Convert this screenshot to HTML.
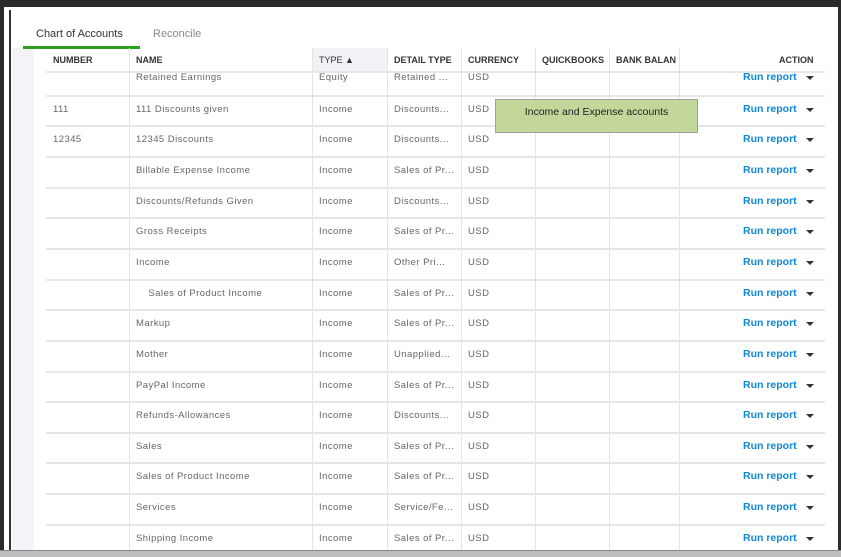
<!DOCTYPE html>
<html><head><style>
*{margin:0;padding:0;box-sizing:border-box}
body{width:841px;height:557px;background:#2b2b2b;position:relative;overflow:hidden;font-family:"Liberation Sans",sans-serif}
.page{position:absolute;left:4px;top:7px;width:834px;height:543px;background:#fff}
.vl{position:absolute;left:9px;top:10px;width:2px;height:540px;background:#333}
.strip{position:absolute;left:12px;top:48px;width:22px;height:502px;background:#f3f4f7}
.bot{position:absolute;left:0;top:550px;width:841px;height:7px;background:#bdbdbd;border-top:1px solid #888}
.tab{position:absolute;top:28px;font-size:11px}
.green{position:absolute;left:23px;top:46px;width:117px;height:3px;background:#2ca01c}
.t{position:absolute;font-size:9.5px;letter-spacing:0.45px;color:#666;white-space:nowrap}
.h{position:absolute;font-size:9px;color:#333;font-weight:bold;white-space:nowrap;top:55px}
.col{position:absolute;top:48px;width:1px;height:502px;background:#e4e4e4}
.row{position:absolute;left:46px;width:779px;height:2px;background:#e6e6e6}
.rr{position:absolute;left:743px;font-size:10.5px;color:#0d88d4;font-weight:bold;white-space:nowrap}
.rr::after{content:"";position:absolute;left:63px;top:5px;border-left:4px solid transparent;border-right:4px solid transparent;border-top:4px solid #333}
.tip{position:absolute;left:495px;top:99px;width:203px;height:34px;background:#c4d79b;border:1px solid #a0a0a0;font-size:10.5px;color:#222;text-align:center;padding-top:6px}
</style></head><body>
<div class="page"></div>
<div class="vl"></div>
<div class="strip"></div>
<div class="tab" style="left:36px;color:#333">Chart of Accounts</div>
<div class="tab" style="left:153px;color:#888">Reconcile</div>
<div class="green"></div>
<div style="position:absolute;left:312px;top:48px;width:75px;height:24px;background:#f1f2f5"></div>
<div class="col" style="left:129px"></div><div class="col" style="left:312px"></div><div class="col" style="left:387px"></div><div class="col" style="left:461px"></div><div class="col" style="left:535px"></div><div class="col" style="left:609px"></div><div class="col" style="left:679px"></div>
<div class="row" style="top:71px"></div>
<div class="h" style="left:53px">NUMBER</div><div class="h" style="left:136px">NAME</div><div class="h" style="left:319px;font-weight:normal">TYPE ▲</div><div class="h" style="left:394px">DETAIL TYPE</div><div class="h" style="left:468px">CURRENCY</div><div class="h" style="left:542px">QUICKBOOKS</div><div class="h" style="left:616px">BANK BALAN</div><div class="h" style="left:779px">ACTION</div>
<div id="rows"></div>
<script>
var d=[["","Retained Earnings","Equity","Retained ..."],["111","111 Discounts given","Income","Discounts..."],["12345","12345 Discounts","Income","Discounts..."],["","Billable Expense Income","Income","Sales of Pr..."],["","Discounts/Refunds Given","Income","Discounts..."],["","Gross Receipts","Income","Sales of Pr..."],["","Income","Income","Other Pri..."],["","&nbsp;&nbsp;&nbsp;&nbsp;Sales of Product Income","Income","Sales of Pr..."],["","Markup","Income","Sales of Pr..."],["","Mother","Income","Unapplied..."],["","PayPal Income","Income","Sales of Pr..."],["","Refunds-Allowances","Income","Discounts..."],["","Sales","Income","Sales of Pr..."],["","Sales of Product Income","Income","Sales of Pr..."],["","Services","Income","Service/Fe..."],["","Shipping Income","Income","Sales of Pr..."]];
var h="";d.forEach(function(r,i){var y=i==0?72:72+i*30.65+1;var ty=i==0?72:y;
if(i>0)h+='<div class="row" style="top:'+(y-9)+'px"></div>';
h+='<div class="t" style="left:53px;top:'+(ty)+'px">'+r[0]+'</div><div class="t" style="left:136px;top:'+ty+'px">'+r[1]+'</div><div class="t" style="left:319px;top:'+ty+'px">'+r[2]+'</div><div class="t" style="left:394px;top:'+ty+'px">'+r[3]+'</div><div class="t" style="left:468px;top:'+ty+'px">USD</div><div class="rr" style="top:'+(ty-1)+'px">Run report</div>';});
document.getElementById("rows").innerHTML=h;
</script>
<div class="tip">Income and Expense accounts</div>
<div class="bot"></div>
</body></html>
